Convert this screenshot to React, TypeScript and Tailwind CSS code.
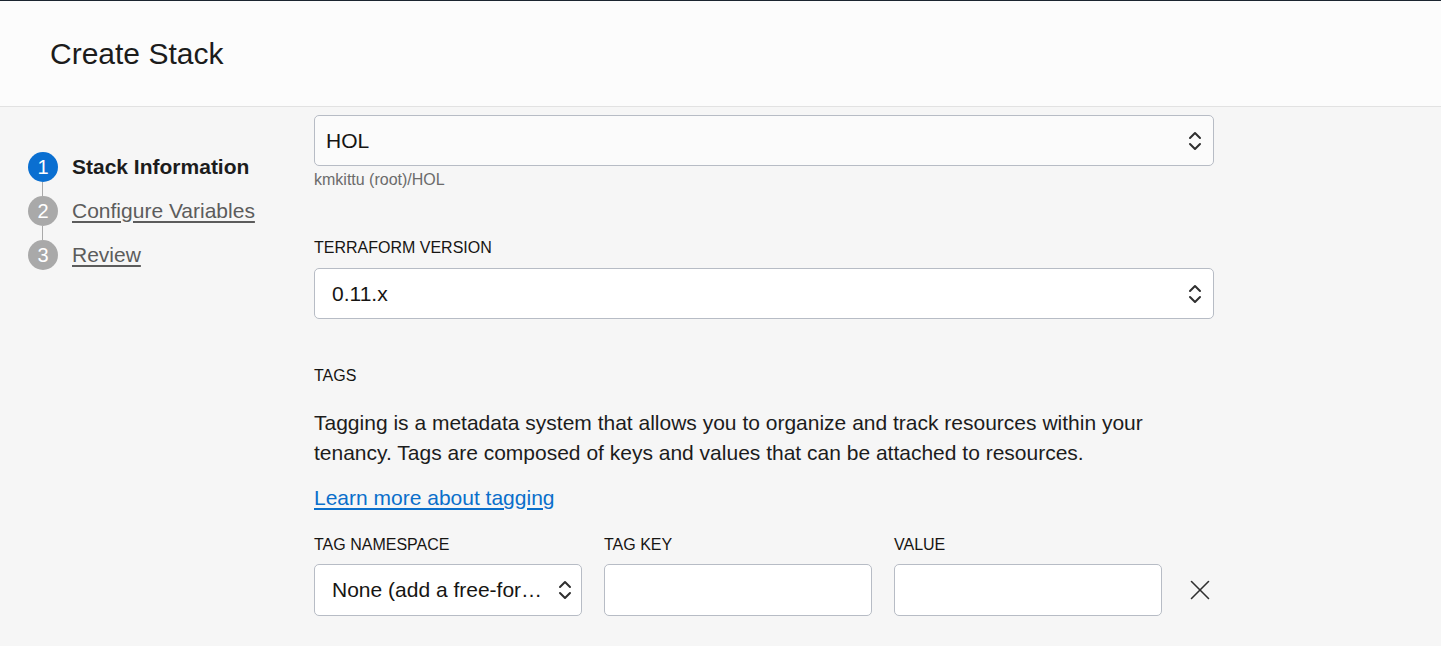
function UpDown() {
  return (
    <svg width="14" height="22" viewBox="0 0 14 22" fill="none" stroke="#2f2f2f" strokeWidth="2" strokeLinecap="round" strokeLinejoin="round">
      <polyline points="2,8 7,3 12,8" />
      <polyline points="2,14 7,19 12,14" />
    </svg>
  )
}

function Step({ n, label, active }: { n: number; label: string; active?: boolean }) {
  return (
    <div className="flex items-center gap-[14px] h-[30px]">
      <div
        className={
          active
            ? "w-[30px] h-[30px] rounded-full bg-[#0a6fd1] text-white flex items-center justify-center text-[20px] leading-none"
            : "w-[30px] h-[30px] rounded-full bg-[#a9a9a9] text-white flex items-center justify-center text-[20px] leading-none"
        }
      >
        {n}
      </div>
      {active ? (
        <span className="text-[21px] leading-[30px] font-bold text-[#1c1c1c]">{label}</span>
      ) : (
        <a className="text-[21px] leading-[30px] text-[#5c5c5c] underline underline-offset-[3px] cursor-pointer">{label}</a>
      )}
    </div>
  )
}

function Line() {
  return <div className="ml-[14px] w-px h-[14px] bg-[#a9a9a9]" />
}

function Label({ text, className = "" }: { text: string; className?: string }) {
  return <div className={"text-[16px] leading-[18px] text-[#161513] " + className}>{text}</div>
}

export default function App() {
  return (
    <div className="w-[1441px] h-[646px] overflow-hidden bg-[#f6f6f6] font-['Liberation_Sans',Arial,sans-serif] text-[#161513]">
      <header className="h-[107px] border-t border-b border-t-[#1b2530] border-b-[#e2e2e2] bg-[#fcfcfc] flex items-center pl-[50px]">
        <h1 className="text-[30px] text-[#1c1c1c]">Create Stack</h1>
      </header>

      <div className="flex">
        <nav className="w-[314px] pl-[28px] pt-[45px] flex flex-col">
          <Step n={1} label="Stack Information" active />
          <Line />
          <Step n={2} label="Configure Variables" />
          <Line />
          <Step n={3} label="Review" />
        </nav>

        <main className="w-[900px] pt-[8px] flex flex-col">
          <div className="h-[51px] rounded-[5px] border border-[#b7bcc5] bg-[#fbfbfb] flex items-center justify-between pl-[11px] pr-[11px]">
            <span className="text-[21px]">HOL</span>
            <UpDown />
          </div>
          <div className="mt-[5px] text-[16px] leading-[18px] text-[#6b6b6b]">kmkittu (root)/HOL</div>

          <Label text="TERRAFORM VERSION" className="mt-[50px]" />
          <div className="mt-[11px] h-[51px] rounded-[5px] border border-[#b7bcc5] bg-white flex items-center justify-between pl-[17px] pr-[11px]">
            <span className="text-[21px]">0.11.x</span>
            <UpDown />
          </div>

          <Label text="TAGS" className="mt-[48px]" />
          <p className="mt-[23px] text-[21px] leading-[30px] text-[#1c1c1c]">
            Tagging is a metadata system that allows you to organize and track resources within your tenancy. Tags are
            composed of keys and values that can be attached to resources.
          </p>
          <a className="mt-[15px] self-start text-[21px] leading-[30px] text-[#0a6fcb] underline underline-offset-[3px] cursor-pointer">
            Learn more about tagging
          </a>

          <div className="mt-[23px] flex gap-[22px] items-end">
            <div className="w-[268px] flex flex-col">
              <Label text="TAG NAMESPACE" />
              <div className="mt-[10px] h-[52px] rounded-[5px] border border-[#b7bcc5] bg-white flex items-center justify-between pl-[17px] pr-[9px] gap-[14px]">
                <span className="text-[21px] truncate">None (add a free-form tag)</span>
                <div className="shrink-0">
                  <UpDown />
                </div>
              </div>
            </div>
            <div className="w-[268px] flex flex-col">
              <Label text="TAG KEY" />
              <div className="mt-[10px] h-[52px] rounded-[5px] border border-[#b7bcc5] bg-white" />
            </div>
            <div className="w-[268px] flex flex-col">
              <Label text="VALUE" />
              <div className="mt-[10px] h-[52px] rounded-[5px] border border-[#b7bcc5] bg-white" />
            </div>
            <div className="h-[52px] flex items-center pl-[6px]">
              <svg width="20" height="20" viewBox="0 0 20 20" fill="none" stroke="#2f2f2f" strokeWidth="1.6" strokeLinecap="round">
                <line x1="1.5" y1="1.5" x2="18.5" y2="18.5" />
                <line x1="18.5" y1="1.5" x2="1.5" y2="18.5" />
              </svg>
            </div>
          </div>
        </main>
      </div>
    </div>
  )
}
